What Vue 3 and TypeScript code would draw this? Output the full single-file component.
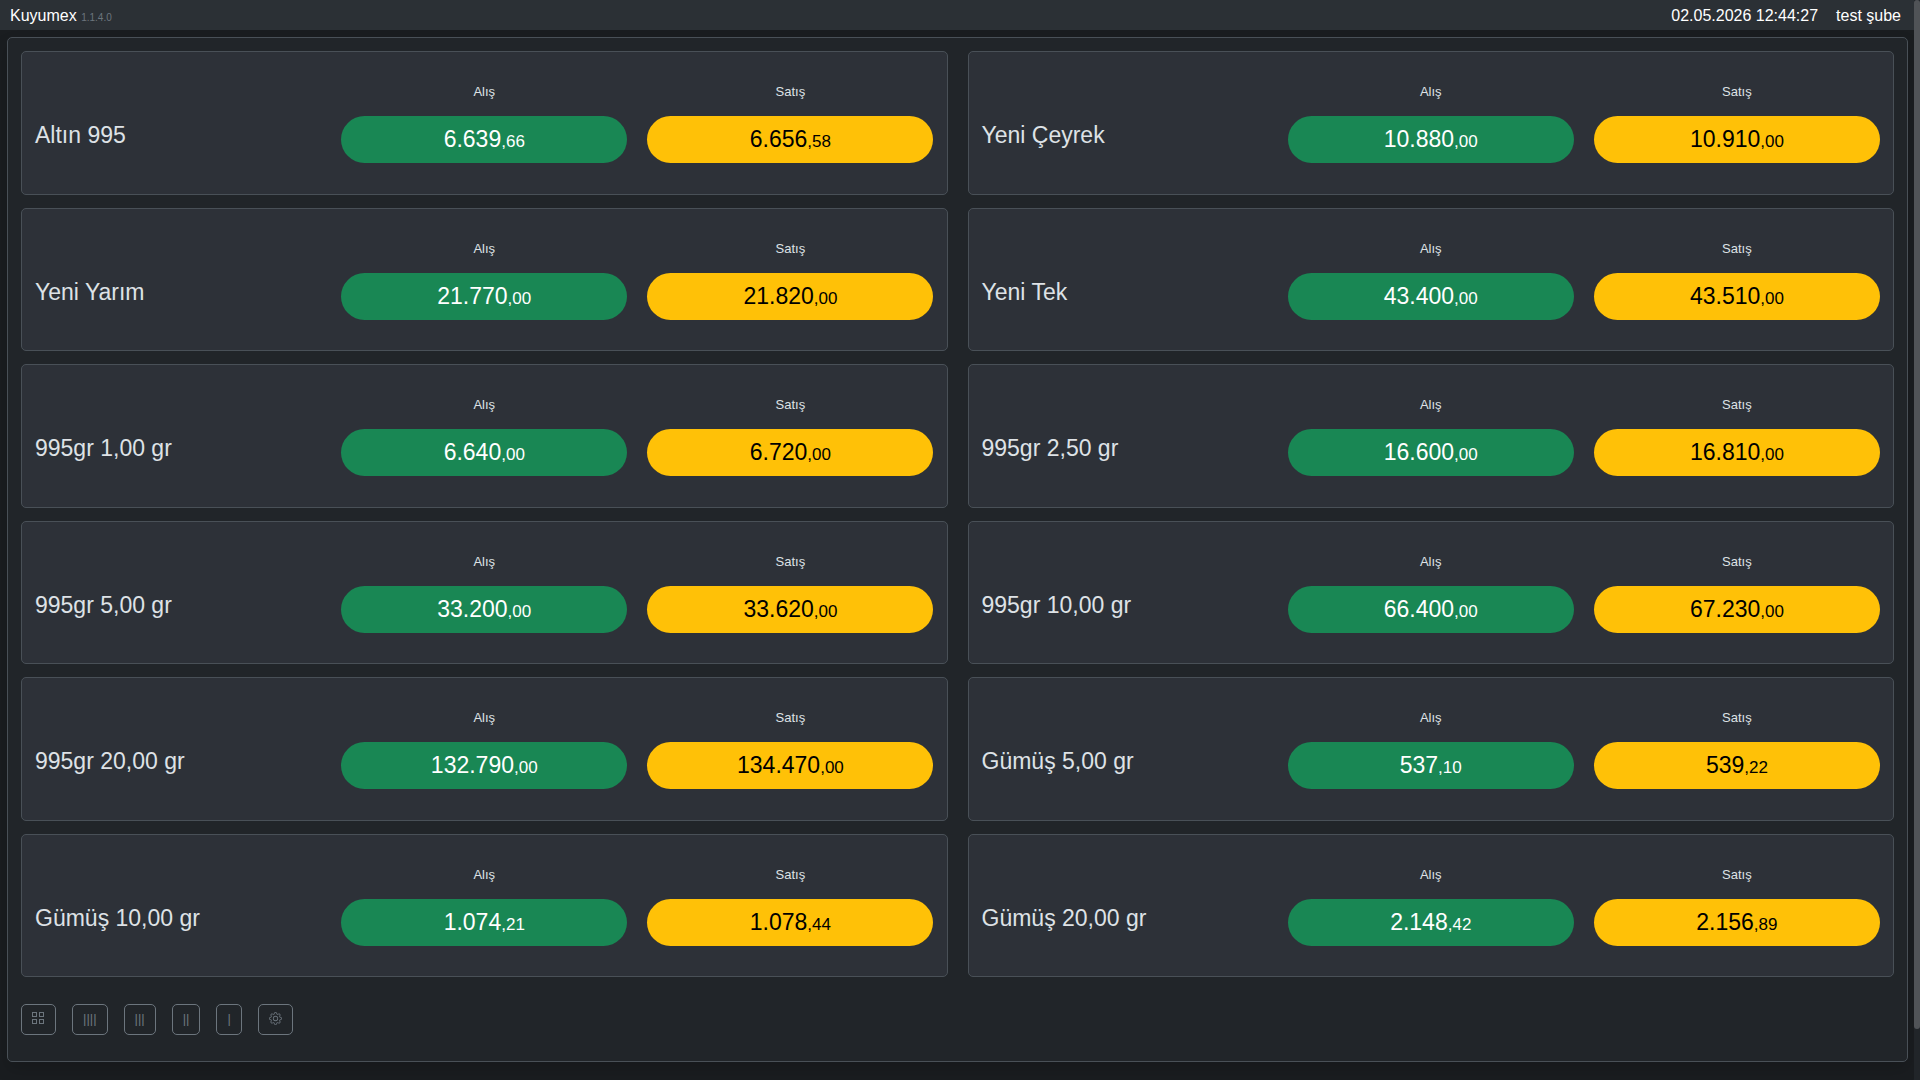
<script setup lang="ts">
interface Quote {
  name: string
  buy: string
  sell: string
}

const quotes: Quote[] = [
  { name: 'Altın 995', buy: '6.639,66', sell: '6.656,58' },
  { name: 'Yeni Çeyrek', buy: '10.880,00', sell: '10.910,00' },
  { name: 'Yeni Yarım', buy: '21.770,00', sell: '21.820,00' },
  { name: 'Yeni Tek', buy: '43.400,00', sell: '43.510,00' },
  { name: '995gr 1,00 gr', buy: '6.640,00', sell: '6.720,00' },
  { name: '995gr 2,50 gr', buy: '16.600,00', sell: '16.810,00' },
  { name: '995gr 5,00 gr', buy: '33.200,00', sell: '33.620,00' },
  { name: '995gr 10,00 gr', buy: '66.400,00', sell: '67.230,00' },
  { name: '995gr 20,00 gr', buy: '132.790,00', sell: '134.470,00' },
  { name: 'Gümüş 5,00 gr', buy: '537,10', sell: '539,22' },
  { name: 'Gümüş 10,00 gr', buy: '1.074,21', sell: '1.078,44' },
  { name: 'Gümüş 20,00 gr', buy: '2.148,42', sell: '2.156,89' },
]

const columnChoices: string[] = ['||||', '|||', '||', '|']

const whole = (value: string): string => value.split(',')[0]
const cents = (value: string): string => ',' + value.split(',')[1]
</script>

<template>
  <div class="shell">
    <div class="page">
      <header class="topbar">
        <div class="brand">Kuyumex <small>1.1.4.0</small></div>
        <div class="status">
          <time>02.05.2026 12:44:27</time>
          <span>test şube</span>
        </div>
      </header>

      <main class="panel">
        <section class="quotes">
          <article v-for="quote in quotes" :key="quote.name" class="card">
            <h2 class="name">{{ quote.name }}</h2>
            <div class="price">
              <span class="label">Alış</span>
              <div class="pill buy"><span>{{ whole(quote.buy) }}<small>{{ cents(quote.buy) }}</small></span></div>
            </div>
            <div class="price">
              <span class="label">Satış</span>
              <div class="pill sell"><span>{{ whole(quote.sell) }}<small>{{ cents(quote.sell) }}</small></span></div>
            </div>
          </article>
        </section>

        <nav class="tools">
          <button type="button" aria-label="Izgara">
            <svg viewBox="0 0 13 13" fill="none" stroke="currentColor">
              <rect x="0.500" y="0.500" width="4" height="4" />
              <rect x="7.500" y="0.500" width="4" height="4" />
              <rect x="0.500" y="7.500" width="4" height="4" />
              <rect x="7.500" y="7.500" width="4" height="4" />
            </svg>
          </button>
          <button v-for="choice in columnChoices" :key="choice" type="button">{{ choice }}</button>
          <button type="button" aria-label="Ayarlar">
            <svg viewBox="0 0 16 16" fill="currentColor">
              <path d="M8 4.754a3.246 3.246 0 1 0 0 6.492 3.246 3.246 0 0 0 0-6.492M5.754 8a2.246 2.246 0 1 1 4.492 0 2.246 2.246 0 0 1-4.492 0" />
              <path d="M9.796 1.343c-.527-1.790-3.065-1.790-3.592 0l-.094.319a.873.873 0 0 1-1.255.52l-.292-.16c-1.640-.892-3.433.902-2.540 2.541l.159.292a.873.873 0 0 1-.52 1.255l-.319.094c-1.790.527-1.790 3.065 0 3.592l.319.094a.873.873 0 0 1 .52 1.255l-.16.292c-.892 1.640.901 3.434 2.541 2.540l.292-.159a.873.873 0 0 1 1.255.52l.094.319c.527 1.790 3.065 1.790 3.592 0l.094-.319a.873.873 0 0 1 1.255-.52l.292.16c1.640.893 3.434-.902 2.540-2.541l-.159-.292a.873.873 0 0 1 .52-1.255l.319-.094c1.790-.527 1.790-3.065 0-3.592l-.319-.094a.873.873 0 0 1-.52-1.255l.16-.292c.893-1.640-.902-3.433-2.541-2.540l-.292.159a.873.873 0 0 1-1.255-.52zm-2.633.283c.246-.835 1.428-.835 1.674 0l.094.319a1.873 1.873 0 0 0 2.693 1.115l.291-.16c.764-.415 1.600.42 1.184 1.185l-.159.292a1.873 1.873 0 0 0 1.116 2.692l.318.094c.835.246.835 1.428 0 1.674l-.319.094a1.873 1.873 0 0 0-1.115 2.693l.16.291c.415.764-.42 1.600-1.185 1.184l-.291-.159a1.873 1.873 0 0 0-2.693 1.116l-.094.318c-.246.835-1.428.835-1.674 0l-.094-.319a1.873 1.873 0 0 0-2.692-1.115l-.292.16c-.764.415-1.600-.42-1.184-1.185l.159-.291A1.873 1.873 0 0 0 1.945 8.930l-.319-.094c-.835-.246-.835-1.428 0-1.674l.319-.094A1.873 1.873 0 0 0 3.060 4.377l-.16-.292c-.415-.764.42-1.600 1.185-1.184l.292.159a1.873 1.873 0 0 0 2.692-1.115z" />
            </svg>
          </button>
        </nav>
      </main>
    </div>
    <div class="rail"><div class="thumb"></div></div>
  </div>
</template>

<style>
body {
  background: #1a1d20;
}
</style>

<style scoped>
.shell {
  display: flex;
  min-height: 100vh;
  font-family: 'Liberation Sans', Arial, sans-serif;
  color: #dee2e6;
}

.page {
  flex: 1;
  min-width: 0;
}

.topbar {
  box-sizing: border-box;
  display: flex;
  justify-content: space-between;
  align-items: center;
  height: 30px;
  padding: 2px 13px 0 10px;
  background: #2b3035;
  color: #fff;
  font-size: 16px;
}

.brand small {
  font-size: 10px;
  color: #6c757d;
}

.status {
  display: flex;
  gap: 18px;
}

.panel {
  margin: 7px 6px 18px 7px;
  padding: 13px;
  border: 1px solid #495057;
  border-radius: 5px;
  background: #212529;
  box-shadow: 0 8px 16px rgba(0, 0, 0, 0.15);
}

.quotes {
  display: grid;
  grid-template-columns: repeat(2, 1fr);
  grid-auto-rows: 1fr;
  gap: 13px 20px;
  min-height: calc(100vh - 154px);
}

.card {
  display: grid;
  grid-template-columns: repeat(3, 1fr);
  align-items: center;
  column-gap: 20px;
  padding: 13px;
  border: 1px solid #495057;
  border-radius: 5px;
  background: #2d3138;
}

.name {
  margin: 0;
  padding-top: 25px;
  font-size: 23px;
  font-weight: 400;
  line-height: 28px;
}

.price {
  display: flex;
  flex-direction: column;
  gap: 14px;
  text-align: center;
}

.label {
  font-size: 13px;
  line-height: 20px;
}

.pill {
  height: 47px;
  border-radius: 24px;
  font-size: 23px;
  line-height: 47px;
}

.pill small {
  font-size: 17px;
}

.buy {
  background: #198754;
  color: #fff;
}

.sell {
  background: #ffc107;
  color: #000;
}

.tools {
  display: flex;
  gap: 16px;
  padding: 27px 0 13px;
}

.tools button {
  display: flex;
  align-items: center;
  height: 31px;
  padding: 0 10px 3px;
  border: 1px solid #6c757d;
  border-radius: 5px;
  background: transparent;
  color: #6c757d;
  font-family: inherit;
  font-size: 13px;
}

.tools svg {
  width: 13px;
  height: 13px;
}

.rail {
  width: 6px;
  background: #212529;
}

.thumb {
  height: calc(100vh - 51px);
  border-radius: 3px;
  background: #505357;
}
</style>
